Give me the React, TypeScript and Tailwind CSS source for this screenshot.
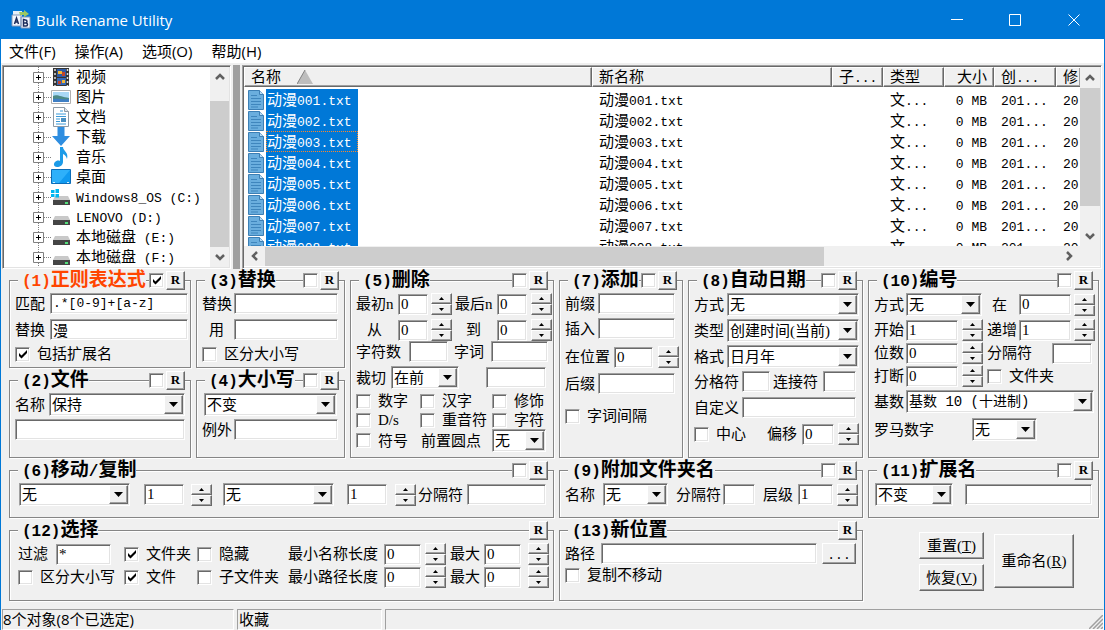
import { Fragment, useState } from 'react'
import type { ReactNode } from 'react'
import clsx from 'clsx'

const sunken =
  'border border-t-[#a0a0a0] border-l-[#a0a0a0] border-r-white border-b-white shadow-[inset_1px_1px_0_#696969,inset_-1px_-1px_0_#e3e3e3]'
const raised =
  'border border-t-white border-l-white border-r-[#696969] border-b-[#696969] shadow-[inset_-1px_-1px_0_#a0a0a0] bg-[#f0f0f0]'

const folders = [
  { name: '视频', icon: 'video' },
  { name: '图片', icon: 'picture' },
  { name: '文档', icon: 'document' },
  { name: '下载', icon: 'download' },
  { name: '音乐', icon: 'music' },
  { name: '桌面', icon: 'desktop' },
  { name: 'Windows8_OS (C:)', icon: 'system' },
  { name: 'LENOVO (D:)', icon: 'drive' },
  { name: '本地磁盘 (E:)', icon: 'drive' },
  { name: '本地磁盘 (F:)', icon: 'drive' },
]

const files = [1, 2, 3, 4, 5, 6, 7, 8].map((n) => `动漫00${n}.txt`)

// Latin runs are set in a half-width face next to the full-width characters
function Mixed({ text, latin = 'text-[13px]' }: { text: string; latin?: string }) {
  return (
    <>
      {text.split(/([\x20-\x7e]+)/).map((part, i) =>
        i % 2 ? (
          <span key={i} className={clsx("font-['Liberation_Mono',monospace] leading-none whitespace-pre", latin)}>{part}</span>
        ) : (
          <Fragment key={i}>{part}</Fragment>
        ),
      )}
    </>
  )
}

function TextBox({ className, value = '', label }: { className?: string; value?: string; label?: string }) {
  return (
    <input
      type="text"
      defaultValue={value}
      aria-label={label}
      className={clsx('h-[21px] min-w-0 rounded-none bg-white pl-[2px] leading-4 outline-none', sunken, className)}
    />
  )
}

interface FieldProps {
  label: string
  labelClass?: string
  className?: string
  value?: string
  grow?: boolean
}

function Field({ label, labelClass, className, value, grow }: FieldProps) {
  return (
    <label className={clsx('flex items-center', grow ? 'min-w-0 flex-1' : 'shrink-0')}>
      <span className={clsx('shrink-0 whitespace-nowrap', labelClass)}>{label}</span>
      <TextBox value={value} className={className} />
    </label>
  )
}

interface DropDownProps {
  options: string[]
  label?: string
  labelClass?: string
  className: string
  textClass?: string
  ariaLabel?: string
}

function DropDown({ options, label, labelClass, className, textClass, ariaLabel }: DropDownProps) {
  return (
    <label className={clsx('flex items-center', className.includes('flex-1') && 'min-w-0 flex-1')}>
      {label && <span className={clsx('shrink-0 whitespace-nowrap', labelClass)}>{label}</span>}
      <span className={clsx('relative flex h-[23px] min-w-0 bg-white', sunken, className)}>
        <select aria-label={ariaLabel} className={clsx('w-full appearance-none bg-transparent pl-[2px] outline-none', textClass)}>
          {options.map((o) => (
            <option key={o}>{o}</option>
          ))}
        </select>
        <span className={clsx('pointer-events-none absolute top-px right-px bottom-px flex w-[19px] items-center justify-center', raised)}>
          <svg width="9" height="5" viewBox="0 0 9 5">
            <path d="M0 0h9L4.500 5z" />
          </svg>
        </span>
      </span>
    </label>
  )
}

function CheckBox({ label, checked, className, ariaLabel }: { label?: string; checked?: boolean; className?: string; ariaLabel?: string }) {
  return (
    <label className={clsx('flex shrink-0 items-center gap-[7px] whitespace-nowrap', className)}>
      <span className="relative size-[15px]">
        <input
          type="checkbox"
          defaultChecked={checked}
          aria-label={ariaLabel}
          className={clsx('peer block size-[15px] appearance-none bg-white', sunken)}
        />
        <svg className="pointer-events-none absolute inset-0 hidden peer-checked:block" width="15" height="15" viewBox="0 0 15 15">
          <path d="M4 6v3l2.500 2.500L12 6V3L6.500 8.500z" />
        </svg>
      </span>
      {label}
    </label>
  )
}

function Spinner({ className }: { className?: string }) {
  return (
    <span className={clsx('flex h-[22px] w-[21px] shrink-0 flex-col', className)}>
      <button type="button" aria-label="增加" className={clsx('flex flex-1 items-center justify-center', raised)}>
        <svg width="5" height="3" viewBox="0 0 5 3"><path d="M0 3h5L2.500 0z" /></svg>
      </button>
      <button type="button" aria-label="减少" className={clsx('flex flex-1 items-center justify-center', raised)}>
        <svg width="5" height="3" viewBox="0 0 5 3"><path d="M0 0h5L2.500 3z" /></svg>
      </button>
    </span>
  )
}

interface PanelProps {
  title: string
  active?: boolean
  toggle?: boolean
  className?: string
  children: ReactNode
}

function Panel({ title, active, toggle = true, className, children }: PanelProps) {
  return (
    <section className={clsx('border border-[#868686] pl-[5px] shadow-[1px_1px_0_#fff,inset_1px_1px_0_#fff]', className)}>
      <header className="-mt-3 flex h-[22px] items-center justify-between pr-[5px] pl-[3px]">
        <h2 className={clsx('bg-[#f0f0f0] pl-1 text-[19px] leading-[22px] font-bold whitespace-nowrap', active && 'text-[#ff4500]')}>
          <Mixed text={title} latin="text-base" />
        </h2>
        <span className="flex items-center gap-[2px] bg-[#f0f0f0]">
          {toggle && <CheckBox checked={active} ariaLabel={title} />}
          <button type="button" aria-label={`重置 ${title}`} className={clsx('h-[19px] w-[19px] text-[13px] leading-4 font-bold', raised)}>R</button>
        </span>
      </header>
      <div className="flex flex-col pt-[2px]">{children}</div>
    </section>
  )
}

function Chevron({ dir }: { dir: 'up' | 'down' | 'left' | 'right' }) {
  const paths = {
    up: 'M2 8 6 4l4 4',
    down: 'M2 4l4 4 4-4',
    left: 'M8 2 4 6l4 4',
    right: 'M4 2l4 4-4 4',
  }
  return (
    <svg width="12" height="12" viewBox="0 0 12 12" fill="none" stroke="#606060" strokeWidth="2.500">
      <path d={paths[dir]} />
    </svg>
  )
}

function FolderIcon({ type }: { type: string }) {
  return (
    <svg width="20" height="20" viewBox="0 0 20 20" className="shrink-0">
      {type === 'video' && (
        <>
          <path d="M2 1h16v18H2z" fill="#333" />
          <path d="M6 2h9v8H6z" fill="#2d5ba5" />
          <path d="M6 11h9v7H6z" fill="#3668b4" />
          <path d="M7 4h4v3H7zM11 13h3v3h-3z" fill="#f2b632" />
          <path d="M11 5h3v4h-3zM7 14h3v3H7z" fill="#c0452c" />
          <path d="M4 2v17M16.500 2v17" stroke="#ddd" strokeWidth="1.500" strokeDasharray="2 2" />
        </>
      )}
      {type === 'picture' && (
        <>
          <path d="M.5 3.500h19v13H.5z" fill="#fff" stroke="#b0b0b0" />
          <path d="M2 5h16v10H2z" fill="#a9d8f5" />
          <path d="M2 9c4-2 8 1 16 2v2H2z" fill="#4c8a86" />
          <path d="M2 12c5-1 10 1 16 0v3H2z" fill="#3f7fc4" />
        </>
      )}
      {type === 'document' && (
        <>
          <path d="M2.500.5h11l4 4v15h-15z" fill="#fff" stroke="#8d9aa5" />
          <path d="M13.500.5v4h4" fill="#dde4ea" stroke="#8d9aa5" />
          <path d="M5 7h10M5 9.500h10M5 12h4M5 14.500h4M5 17h10M9 4h3" stroke="#3a9ad9" />
          <path d="M10 11h5v4h-5z" fill="#4a90c2" />
        </>
      )}
      {type === 'download' && <path d="M6.500 0h7v9H19l-9 10L1 9h5.500z" fill="#2f8ee0" />}
      {type === 'music' && (
        <path d="M9 0h3c0 4 6 5 4 12-1-3-2-4-4-5v8c0 3-3 5-6 5s-4-3-2-5c1-1 3-2 5-1z" fill="#1c9be8" />
      )}
      {type === 'desktop' && (
        <>
          <path d="M.5 2.500h19v14H.5z" fill="#109af0" stroke="#0c6db8" />
          <path d="M1 3h18L8 16H1z" fill="#2eb0fa" />
          <path d="M2 15.500h2M16 15.500h2" stroke="#d4f0ff" />
        </>
      )}
      {(type === 'drive' || type === 'system') && (
        <>
          <path d="m4 9-2 4h17l-2-4z" fill="#c9c9c9" />
          <path d="M2 13h17v5H2z" fill="#454545" />
          <path d="M14 15h3v2h-3z" fill="#52e07c" />
        </>
      )}
      {type === 'system' && <path d="M0 3h3.500v3H0zM4.500 2H8v4H4.500zM0 7h3.500v3H0zM4.500 7H8v3.500H4.500z" fill="#00b7f0" />}
    </svg>
  )
}

function TreePane() {
  return (
    <div className={clsx('flex w-[229px] shrink-0 bg-white p-px', sunken)}>
      <ul className="min-w-0 flex-1 overflow-hidden pl-7">
        {folders.map((f) => (
          <li key={f.name} className="flex h-5 items-center whitespace-nowrap">
            <svg width="19" height="20" viewBox="0 0 19 20" className="shrink-0" fill="none">
              <path d="M6.500 0v20M12 10.500h7" stroke="#808080" strokeDasharray="1 1" />
              <path d="M1.500 5.500h10v10h-10z" fill="#fff" stroke="#808080" />
              <path d="M4 10.500h5M6.500 8v5" stroke="#000" />
            </svg>
            <FolderIcon type={f.icon} />
            <span className="pl-[5px]"><Mixed text={f.name} /></span>
          </li>
        ))}
      </ul>
      <div className="flex w-[19px] flex-col items-center bg-[#f0f0f0]">
        <span className="flex h-[34px] items-start pt-1"><Chevron dir="up" /></span>
        <span className="w-full flex-1 bg-[#cdcdcd]" />
        <span className="flex h-5 items-center"><Chevron dir="down" /></span>
      </div>
    </div>
  )
}

function FileList() {
  const [focused, setFocused] = useState(2)
  const th = 'h-5 overflow-hidden border border-t-white border-l-white border-r-[#696969] border-b-[#696969] bg-[#f0f0f0] pl-[6px] text-left font-normal whitespace-nowrap shadow-[inset_-1px_-1px_0_#a0a0a0]'

  return (
    <div className={clsx('flex min-w-0 flex-1 flex-col bg-white p-px', sunken)}>
      <div className="flex h-[179px]">
        <div className="min-w-0 flex-1 overflow-hidden">
          <table className="w-full table-fixed border-separate border-spacing-0 leading-[18px]">
            <colgroup>
              <col />
              <col className="w-[240px]" />
              <col className="w-[51px]" />
              <col className="w-[61px]" />
              <col className="w-[50px]" />
              <col className="w-[62px]" />
              <col className="w-6" />
            </colgroup>
            <thead>
              <tr>
                <th className={th}>
                  <span className="flex items-center gap-4">
                    名称
                    <svg width="16" height="14" viewBox="0 0 16 14">
                      <path d="M8 0 16 14H0z" fill="#bdbdbd" />
                      <path d="M8 0 0 14" stroke="#808080" />
                    </svg>
                  </span>
                </th>
                <th className={th}>新名称</th>
                <th className={th}><Mixed text="子..." /></th>
                <th className={th}>类型</th>
                <th className={clsx(th, 'pr-[6px] text-right')}>大小</th>
                <th className={th}><Mixed text="创..." /></th>
                <th className={clsx(th, 'border-r-0')}>修</th>
              </tr>
            </thead>
            <tbody>
              <tr aria-hidden="true"><td className="h-[2px]" /></tr>
              {files.map((name, i) => (
                <tr key={name} onClick={() => setFocused(i)}>
                  <td className="h-[21px] p-0 pl-1">
                    <span className="flex h-[21px] items-center gap-[2px]">
                      <svg width="16" height="20" viewBox="0 0 16 20">
                        <path d="M.5.5h11l4 4v15H.5z" fill="#6aaede" stroke="#3c7fb5" />
                        <path d="M11.500.5v4h4" fill="#b9dcf5" stroke="#3c7fb5" />
                        <path d="M3 5.500h6M3 8.500h10M3 11.500h10M3 14.500h10M3 17h7" stroke="#3f86bd" />
                      </svg>
                      <span className={clsx('flex h-[21px] w-[92px] items-center border border-dotted bg-[#0078d7] text-white', focused === i ? 'border-[#ff8728]' : 'border-[#0078d7]')}>
                        <span><Mixed text={name} /></span>
                      </span>
                    </span>
                  </td>
                  <td className="p-0 pl-[7px]"><Mixed text={name} /></td>
                  <td />
                  <td className="p-0 pl-[7px]"><Mixed text="文..." /></td>
                  <td className="p-0 pr-[7px] text-right"><Mixed text="0 MB" /></td>
                  <td className="p-0 pl-[7px]"><Mixed text="201..." /></td>
                  <td className="p-0 pl-[7px]"><Mixed text="20" /></td>
                </tr>
              ))}
            </tbody>
          </table>
        </div>
        <div className="flex w-5 shrink-0 flex-col items-center bg-[#f0f0f0]">
          <span className="flex h-[21px] items-center"><Chevron dir="up" /></span>
          <span className="h-[118px] w-full bg-[#cdcdcd]" />
          <span className="flex flex-1 items-end pb-1"><Chevron dir="down" /></span>
        </div>
      </div>
      <div className="flex h-5 items-center bg-[#f0f0f0] pr-[25px]">
        <span className="flex w-[21px] justify-center"><Chevron dir="left" /></span>
        <span className="flex h-[19px] flex-1"><span className="w-[70%] bg-[#cdcdcd]" /></span>
        <Chevron dir="right" />
      </div>
    </div>
  )
}

export default function App() {
  const button = clsx('text-[15px] leading-5 whitespace-nowrap', raised)

  return (
    <div className="min-w-[1105px] border-x border-b border-[#0078d7] bg-[#f0f0f0] font-['Liberation_Serif','Noto_Sans_CJK_SC',serif] text-[15px] leading-5 text-black">
      <div className="flex h-[39px] items-center bg-[#0078d7] pl-[10px] text-white">
        <svg width="20" height="20" viewBox="0 0 20 20">
          <path d="M2 1h9v13H2z" fill="#e6eef8" />
          <path d="M1 5h9v11H1zM10 7h9v11h-9z" fill="#f4f8ff" stroke="#8398ba" />
          <path d="M8 2h5V0l5 4-5 3V5H9z" fill="#9bc862" />
          <path d="m3.500 14 2-6 2 6M4 12h3M12.500 9.500v6.500h2.500c2 0 2-3 0-3h-2.500 2c2 0 2-3 0-3z" fill="none" stroke="#1d2d5c" strokeWidth="1.500" />
        </svg>
        <h1 className="flex-1 pl-[5px] font-['Open_Sans',sans-serif] text-[15px]">Bulk Rename Utility</h1>
        <div className="flex">
          <button type="button" aria-label="最小化" className="flex h-[39px] w-[58px] items-center justify-center">
            <svg width="13" height="13" viewBox="0 0 13 13"><path d="M0 6.500h12" stroke="#fff" /></svg>
          </button>
          <button type="button" aria-label="最大化" className="flex h-[39px] w-[58px] items-center justify-center">
            <svg width="12" height="12" viewBox="0 0 12 12"><path d="M.5.5h11v11H.5z" fill="none" stroke="#fff" /></svg>
          </button>
          <button type="button" aria-label="关闭" className="flex h-[39px] w-[60px] items-center justify-center">
            <svg width="12" height="12" viewBox="0 0 12 12"><path d="m.5.5 11 11M11.500.5l-11 11" stroke="#fff" /></svg>
          </button>
        </div>
      </div>

      <nav className="flex h-[26px] items-center gap-[19px] border-b-2 border-[#f0f0f0] bg-white pl-2 font-['Open_Sans','Noto_Sans_CJK_SC',sans-serif] text-[15px]">
        <button type="button">文件(F)</button>
        <button type="button">操作(A)</button>
        <button type="button">选项(O)</button>
        <button type="button">帮助(H)</button>
      </nav>

      <main>
        <div className="flex pr-[2px] pl-px">
          <TreePane />
          <div className="mr-[2px] ml-[2px] w-[7px] bg-[#a0a0a0]" />
          <FileList />
        </div>

        <form
          className="grid grid-cols-[minmax(0,182fr)_minmax(0,149fr)_minmax(0,204fr)_minmax(0,124fr)_minmax(0,175fr)_minmax(0,231fr)] gap-x-[5px] gap-y-3 pt-[11px] pr-[5px] pb-2 pl-2"
          onSubmit={(e) => e.preventDefault()}
        >
          <Panel title="(1)正则表达式" active>
            <div className="flex pr-[2px]">
              <Field grow label="匹配" labelClass="w-[35px]" className="flex-1 font-['Liberation_Mono',monospace] text-[13px]" value=".*[0-9]+[a-z]" />
            </div>
            <div className="mt-[5px] flex pr-[2px]">
              <Field grow label="替换" labelClass="w-[35px]" className="flex-1" value="漫" />
            </div>
            <CheckBox label="包括扩展名" checked className="mt-1 mb-[3px]" />
          </Panel>

          <Panel title="(3)替换">
            <div className="flex pr-[6px]">
              <Field grow label="替换" labelClass="w-8" className="flex-1" />
            </div>
            <div className="mt-[5px] flex pr-[6px]">
              <Field grow label="用" labelClass="w-8 pl-[7px]" className="flex-1" />
            </div>
            <CheckBox label="区分大小写" className="mt-1" />
          </Panel>

          <Panel title="(5)删除" className="row-span-2">
            <div className="flex items-center">
              <Field label="最初n" labelClass="w-[42px]" className="w-[30px]" value="0" />
              <Spinner className="mr-[3px] ml-[3px]" />
              <Field label="最后n" labelClass="w-[42px]" className="w-[30px]" value="0" />
              <Spinner className="ml-1" />
            </div>
            <div className="mt-1 flex items-center">
              <Field label="从" labelClass="w-[42px] pl-[11px]" className="w-[30px]" value="0" />
              <Spinner className="mr-[3px] ml-[3px]" />
              <Field label="到" labelClass="w-[42px] pl-[11px]" className="w-[30px]" value="0" />
              <Spinner className="ml-1" />
            </div>
            <div className="flex items-center gap-[6px]">
              <Field label="字符数" labelClass="w-[53px]" className="w-[39px]" />
              <Field label="字词" labelClass="w-[37px]" className="w-[57px]" />
            </div>
            <div className="mt-1 flex items-center justify-between pr-[7px]">
              <DropDown label="裁切" labelClass="w-[35px]" className="w-[68px]" options={['在前', '在后']} />
              <TextBox label="裁切文字" className="w-[60px]" />
            </div>
            <div className="mt-[3px] grid grid-cols-[64px_72px_1fr] leading-[19px]">
              <CheckBox label="数字" />
              <CheckBox label="汉字" />
              <CheckBox label="修饰" />
              <CheckBox label="D/s" />
              <CheckBox label="重音符" />
              <CheckBox label="字符" />
            </div>
            <div className="-mt-px flex items-center gap-[13px]">
              <CheckBox label="符号" />
              <DropDown label="前置圆点" labelClass="w-[71px]" className="w-[54px]" options={['无']} />
            </div>
          </Panel>

          <Panel title="(7)添加" className="row-span-2">
            <div className="flex pr-[7px]"><Field grow label="前缀" labelClass="w-[33px]" className="flex-1" /></div>
            <div className="mt-1 flex pr-[7px]"><Field grow label="插入" labelClass="w-[33px]" className="flex-1" /></div>
            <div className="mt-[7px] flex items-center justify-between pr-[3px]">
              <Field label="在位置" labelClass="w-[49px]" className="w-[39px]" value="0" />
              <Spinner />
            </div>
            <div className="mt-[5px] flex pr-[7px]"><Field grow label="后缀" labelClass="w-[33px]" className="flex-1" /></div>
            <CheckBox label="字词间隔" className="mt-3" />
          </Panel>

          <Panel title="(8)自动日期" className="row-span-2">
            <div className="flex flex-col gap-[3px] pr-[3px]">
              <DropDown label="方式" labelClass="w-[33px]" className="flex-1" options={['无']} />
              <DropDown label="类型" labelClass="w-[33px]" className="flex-1" options={['创建时间(当前)', '修改时间(当前)']} />
              <DropDown label="格式" labelClass="w-[33px]" className="flex-1" options={['日月年', '年月日']} />
            </div>
            <div className="mt-[3px] flex items-center justify-between pr-[6px]">
              <Field label="分格符" labelClass="w-[48px]" className="w-7" />
              <Field label="连接符" labelClass="w-[50px]" className="w-[33px]" />
            </div>
            <div className="mt-[5px] flex pr-[6px]"><Field grow label="自定义" labelClass="w-[48px]" className="flex-1" /></div>
            <div className="mt-[5px] flex items-center justify-between pr-[3px]">
              <CheckBox label="中心" />
              <span className="flex items-center gap-1">
                <Field label="偏移" labelClass="w-[35px]" className="w-8" value="0" />
                <Spinner />
              </span>
            </div>
          </Panel>

          <Panel title="(10)编号" className="row-span-2">
            <div className="grid grid-cols-[113px_1fr] pr-[3px]">
              <DropDown label="方式" labelClass="w-8" className="w-[76px]" options={['无']} />
              <div className="flex items-center justify-between">
                <Field label="在" labelClass="w-8 pl-[5px]" className="w-[52px]" value="0" />
                <Spinner />
              </div>
              <div className="mt-[3px] flex items-center">
                <Field label="开始" labelClass="w-8" className="w-[52px]" value="1" />
                <Spinner className="ml-1" />
              </div>
              <div className="mt-[3px] flex items-center justify-between">
                <Field label="递增" labelClass="w-8" className="w-[52px]" value="1" />
                <Spinner />
              </div>
              <div className="mt-px flex items-center">
                <Field label="位数" labelClass="w-8" className="w-[52px]" value="0" />
                <Spinner className="ml-1" />
              </div>
              <div className="mt-px flex items-center">
                <Field label="分隔符" labelClass="w-[65px]" className="w-10" />
              </div>
              <div className="mt-px flex items-center">
                <Field label="打断" labelClass="w-8" className="w-[52px]" value="0" />
                <Spinner className="ml-1" />
              </div>
              <CheckBox label="文件夹" className="mt-px" />
            </div>
            <div className="mt-[3px] flex pr-1">
              <DropDown
                label="基数"
                labelClass="w-8"
                className="flex-1"
                textClass="font-['Liberation_Mono','Noto_Sans_CJK_SC',monospace] text-sm"
                options={['基数 10 (十进制)', '基数 16 (十六进制)']}
              />
            </div>
            <div className="mt-[5px] flex"><DropDown label="罗马数字" labelClass="w-[98px]" className="w-[65px]" options={['无']} /></div>
          </Panel>

          <Panel title="(2)文件">
            <div className="flex pr-[5px]">
              <DropDown label="名称" labelClass="w-[34px]" className="flex-1" options={['保持', '移除']} />
            </div>
            <div className="mt-[3px] mb-[17px] flex pr-[5px]"><TextBox label="固定名称" className="flex-1" /></div>
          </Panel>

          <Panel title="(4)大小写">
            <div className="flex pr-[7px] pl-[2px]"><DropDown ariaLabel="大小写" className="flex-1" options={['不变', '大写', '小写']} /></div>
            <div className="mt-[3px] flex pr-[6px]"><Field grow label="例外" labelClass="w-8" className="flex-1" /></div>
          </Panel>

          <Panel title="(6)移动/复制" className="col-span-3">
            <div className="flex items-center pr-[7px] pb-[11px] pl-1">
              <DropDown ariaLabel="移动" className="w-[111px]" options={['无']} />
              <TextBox label="移动数量" value="1" className="ml-[14px] w-10" />
              <Spinner className="ml-[7px]" />
              <DropDown ariaLabel="复制" className="ml-[11px] w-[111px]" options={['无']} />
              <TextBox label="复制数量" value="1" className="ml-[13px] w-10" />
              <Spinner className="mr-[2px] ml-2" />
              <Field grow label="分隔符" labelClass="w-[49px]" className="flex-1" />
            </div>
          </Panel>

          <Panel title="(9)附加文件夹名" className="col-span-2">
            <div className="flex items-center justify-between pr-1">
              <DropDown label="名称" labelClass="w-[38px]" className="w-[65px]" options={['无']} />
              <Field label="分隔符" labelClass="w-[47px]" className="w-8" />
              <span className="flex items-center gap-1">
                <Field label="层级" labelClass="w-[35px]" className="w-[35px]" value="1" />
                <Spinner />
              </span>
            </div>
          </Panel>

          <Panel title="(11)扩展名">
            <div className="flex items-center gap-3 pr-[6px] pl-px">
              <DropDown ariaLabel="扩展名" className="w-[78px]" options={['不变', '小写', '大写']} />
              <TextBox label="新扩展名" className="flex-1" />
            </div>
          </Panel>

          <Panel title="(12)选择" toggle={false} className="col-span-3">
            <div className="grid grid-cols-[106px_73px_91px_1fr_auto] gap-y-px pr-1 pb-3 pl-[3px]">
              <Field label="过滤" labelClass="w-[38px]" className="w-[55px]" value="*" />
              <CheckBox label="文件夹" checked />
              <CheckBox label="隐藏" />
              <span className="flex items-center gap-1">
                <Field label="最小名称长度" labelClass="w-24" className="w-[37px]" value="0" />
                <Spinner />
              </span>
              <span className="flex items-center gap-[7px]">
                <Field label="最大" labelClass="w-[34px]" className="w-[37px]" value="0" />
                <Spinner />
              </span>
              <CheckBox label="区分大小写" />
              <CheckBox label="文件" checked />
              <CheckBox label="子文件夹" />
              <span className="flex items-center gap-1">
                <Field label="最小路径长度" labelClass="w-24" className="w-[37px]" value="0" />
                <Spinner />
              </span>
              <span className="flex items-center gap-[7px]">
                <Field label="最大" labelClass="w-[34px]" className="w-[37px]" value="0" />
                <Spinner />
              </span>
            </div>
          </Panel>

          <Panel title="(13)新位置" toggle={false} className="col-span-2">
            <div className="flex items-center gap-[5px] pr-[6px]">
              <Field grow label="路径" labelClass="w-9" className="flex-1" />
              <button type="button" aria-label="浏览" className={clsx('h-[21px] w-[34px] text-center leading-4', raised)}>
                <Mixed text="..." />
              </button>
            </div>
            <CheckBox label="复制不移动" className="mt-px" />
          </Panel>

          <div className="flex items-start gap-[10px] pt-[2px] pl-[51px]">
            <div className="flex flex-col gap-[5px]">
              <button type="reset" className={clsx('h-[27px] w-[65px]', button)}>重置(<u>T</u>)</button>
              <button type="button" className={clsx('h-[27px] w-[65px]', button)}>恢复(<u>V</u>)</button>
            </div>
            <button type="submit" className={clsx('mt-[2px] h-[54px] w-[80px]', button)}>重命名(<u>R</u>)</button>
          </div>
        </form>
      </main>

      <footer className="flex h-[21px] gap-[3px] pl-px font-['Open_Sans','Noto_Sans_CJK_SC',sans-serif] text-[15px] leading-[18px]">
        <span className="w-[232px] border border-[#a0a0a0] border-r-white border-b-white">8个对象(8个已选定)</span>
        <span className="w-[145px] border border-[#a0a0a0] border-r-white border-b-white pl-px">收藏</span>
        <span className="flex flex-1 items-end justify-end border border-[#a0a0a0] border-r-white border-b-white">
          <svg width="14" height="14" viewBox="0 0 14 14">
            <path d="M0 14 14 0M4 14 14 4M8 14l6-6M12 14l2-2" stroke="#a0a0a0" strokeWidth="1.500" />
          </svg>
        </span>
      </footer>
    </div>
  )
}
